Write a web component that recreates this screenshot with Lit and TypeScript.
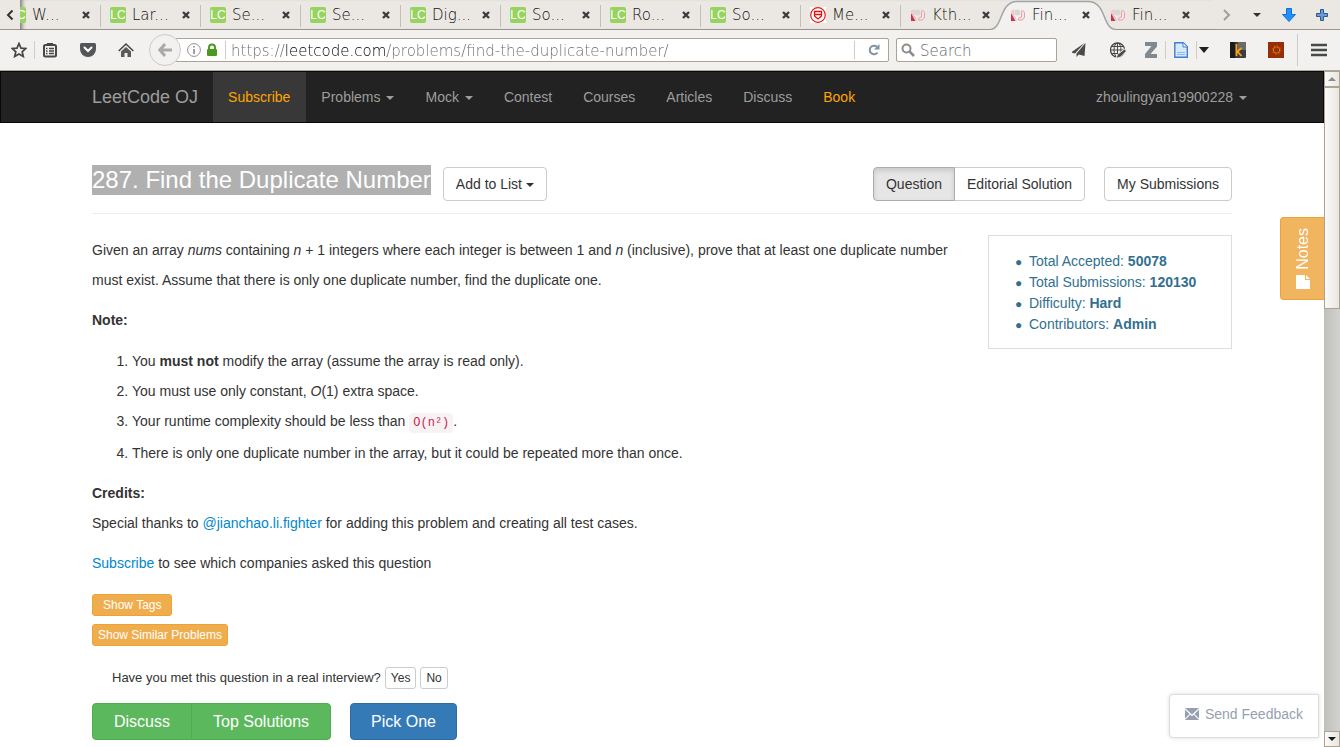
import { LitElement, html, css, svg, nothing } from "lit";
import { customElement, property } from "lit/decorators.js";

type TabKind = "lc" | "shield" | "hands";

interface Tab {
  title: string;
  kind: TabKind;
  active?: boolean;
}

const TABS: Tab[] = [
  { title: "W...", kind: "lc" },
  { title: "Lar...", kind: "lc" },
  { title: "Se...", kind: "lc" },
  { title: "Se...", kind: "lc" },
  { title: "Dig...", kind: "lc" },
  { title: "So...", kind: "lc" },
  { title: "Ro...", kind: "lc" },
  { title: "So...", kind: "lc" },
  { title: "Me...", kind: "shield" },
  { title: "Kth...", kind: "hands" },
  { title: "Fin...", kind: "hands", active: true },
  { title: "Fin...", kind: "hands" },
];

const icon = (w: number, h: number, body: unknown) =>
  html`<svg width=${w} height=${h} viewBox="0 0 ${w} ${h}" aria-hidden="true">${body}</svg>`;

const shieldIcon = icon(16, 16, svg`
  <rect width="16" height="16" fill="#fff"/>
  <circle cx="8" cy="8" r="7.300" fill="#fff" stroke="#f01414" stroke-width="1.200"/>
  <path d="M4.500 4.500h7v4.500L8 12 4.500 9zM4.500 7.500h7" fill="none" stroke="#e01010" stroke-width="1.300"/>`);

const handsIcon = icon(16, 16, svg`
  <path d="M1 6.500v7.500h4.500L4 11 2.500 8z" fill="#c8324a"/>
  <path d="M1.500 5Q1.500 3 4 3L3.500 8l3 5.500H5.500L3 9z" fill="#f3dcdc" stroke="#eab9bd" stroke-width=".8"/>
  <ellipse cx="7.300" cy="5.500" rx="3" ry="3" fill="#d9d6d1"/>
  <path d="M11 3.800q3-.5 3.500 1.700v4.500q-.5 2-2.500 3H8.500v-1.500q1.500-1.500 3-1.500V5" fill="#f7e4e4" stroke="#e5a0a8" stroke-width="1"/>`);

const closeIcon = icon(8, 8, svg`<path d="M1 1l6 6M7 1l-6 6" stroke="#3c3c40" stroke-width="2.400"/>`);

@customElement("browser-tabs")
export class BrowserTabs extends LitElement {
  static styles = css`
    :host { display: flex; height: 30px; background: #ebe8e3; box-shadow: inset 0 -1px #9a968e; color: #111;
      font: 200 15px/32px "DejaVu Sans", sans-serif; }
    button { border: 0; padding: 0; background: none; display: flex; align-items: center; justify-content: center; }
    svg { display: block; flex: none; }
    .scroll { width: 20px; flex: none; }
    .strip { display: flex; flex: 0 1 1193px; min-width: 0; overflow: hidden; box-shadow: inset 5px 0 4px -3px #77736b; }
    .tab { flex: 0 0 100px; box-sizing: border-box; display: flex; align-items: center; padding: 0 10px; position: relative; }
    .tab:first-child { margin-left: -20px; }
    .tab::after { content: ""; position: absolute; right: -1px; top: 5px; height: 22px; width: 1px; background: #c2beb8; }
    .tab.active::after, .tab.before::after, .tab:last-child::after { display: none; }
    .tab.active { z-index: 1; }
    .curve { position: absolute; left: -10px; top: 0; }
    .face { display: flex; align-items: center; position: relative; width: 100%; }
    .lc { width: 16px; height: 16px; border-radius: 2px; background: #96d35f; color: #fff; font: 12px/17px "Liberation Sans", sans-serif; text-align: center; }
    .title { margin-left: 6px; flex: 1; white-space: nowrap; }
    .tools { display: flex; flex: 1; justify-content: space-between; align-items: center; padding: 0 12px 0 8px; }
  `;
  render() {
    return html`
      <button class="scroll" aria-label="Scroll tabs left">${icon(8, 12, svg`<path d="M6.500 1.500L2 6l4.500 4.500" fill="none" stroke="#2e3436" stroke-width="2"/>`)}</button>
      <div class="strip" role="tablist">
        ${TABS.map((t, i) => html`
          <div class="tab ${t.active ? "active" : ""} ${TABS[i + 1]?.active ? "before" : ""}" role="tab">
            ${t.active ? html`<svg class="curve" width="126" height="30" viewBox="0 0 126 30" aria-hidden="true">
              <path d="M0 29.500C13 29.500 9 1.500 27 1.500H98C117 1.500 112 29.500 126 29.500V30H0z" fill="#f2f1f0"/>
              <path d="M0 29.500C13 29.500 9 1.500 27 1.500H98C117 1.500 112 29.500 126 29.500" fill="none" stroke="#a5a5a5" stroke-width="1.500"/></svg>` : nothing}
            <div class="face">
              ${t.kind === "lc" ? html`<span class="lc">LC</span>` : t.kind === "shield" ? shieldIcon : handsIcon}
              <span class="title">${t.title}</span>
              <button aria-label="Close tab">${closeIcon}</button>
            </div>
          </div>`)}
      </div>
      <div class="tools">
        <button aria-label="Scroll tabs right">${icon(12, 12, svg`<path d="M3 1l5 5-5 5" fill="none" stroke="#a09f9c" stroke-width="2"/>`)}</button>
        <button aria-label="All tabs">${icon(8, 4, svg`<path d="M0 0h8L4 4z" fill="#2e3436"/>`)}</button>
        <button aria-label="Downloads">${icon(14, 14, svg`<path d="M4.500.5h5v6h4L7 13.500.5 6.500h4z" fill="#1e90ff" stroke="#1371d1"/>`)}</button>
        <button aria-label="New tab">${icon(12, 12, svg`<path d="M4.500.5h3v4h4v3h-4v4h-3v-4h-4v-3h4z" fill="#6f9bd1" stroke="#2c5894"/>`)}</button>
      </div>`;
  }
}

@customElement("browser-toolbar")
export class BrowserToolbar extends LitElement {
  static styles = css`
    :host { display: flex; align-items: center; height: 40px; padding-left: 4px; background: #f2f1f0; border-bottom: 1px solid #aea79b;
      font: 200 15px/22px "DejaVu Sans", sans-serif; }
    button { border: 0; padding: 0; background: none; display: flex; align-items: center; justify-content: center; flex: none; height: 32px; width: 38px; }
    svg { display: block; flex: none; }
    .w28 { width: 28px; }
    .w30 { width: 30px; }
    .w42 { width: 42px; }
    .w14 { width: 14px; margin-right: 8px; }
    .gap { margin-left: 4px; }
    .sep { width: 1px; height: 18px; background: #cfccc8; flex: none; }
    .tall { height: 32px; margin-left: 2px; }
    .back { width: 32px; margin-left: 4px; border: 1px solid #cfcbc0; border-radius: 50%; background: #f2f1f0; z-index: 1; }
    .box { box-sizing: border-box; height: 24px; border: 1px solid #aca393; border-radius: 2px; background: #fff; display: flex; align-items: center; }
    .url { flex: 1; min-width: 0; margin-left: -6px; padding-left: 11px; gap: 5px; }
    .url .sep { margin-left: 2px; }
    .url button { width: 28px; height: 22px; }
    .search { flex: 0 1 161px; min-width: 80px; margin: 0 4px 0 7px; padding-left: 4px; gap: 5px; }
    input { flex: 1; min-width: 0; width: 100%; height: 22px; border: 0; padding: 1px 0 0; box-sizing: border-box; outline: 0; background: none; font: inherit; color: #2e3436; }
    input::placeholder { color: #666; opacity: 1; }
    .address { -webkit-text-fill-color: transparent; background: linear-gradient(90deg, #686868 54px, #000 54px, #000 156px, #686868 156px); background-clip: text; -webkit-background-clip: text; }
  `;
  render() {
    return html`
      <button class="w30" aria-label="Bookmark">${icon(16, 16, svg`<path d="M8 1.500l2 4.600 4.800.4-3.600 3.300 1.100 4.700L8 12l-4.300 2.500 1.100-4.700L1.200 6.500 6 6.100z" fill="none" stroke="#474747" stroke-width="1.700"/>`)}</button>
      <span class="sep"></span>
      <button class="w30" aria-label="Reading list">${icon(14, 16, svg`<rect x="1" y="3" width="12" height="11.500" rx="1.500" fill="none" stroke="#474747" stroke-width="2"/><path d="M4 1h6v3H4z" fill="#474747"/><path d="M3 6.500h1.500M6 6.500h5M3 9h1.500M6 9h5M3 11.500h1.500M6 11.500h5" stroke="#474747" stroke-width="1.300"/>`)}</button>
      <button class="gap" aria-label="Pocket">${icon(16, 14, svg`<path d="M1.500 0h13Q16 0 16 1.500V6a8 8 0 0 1-16 0V1.500Q0 0 1.500 0z" fill="#55565a"/><path d="M4.500 4.500L8 8l3.500-3.500" fill="none" stroke="#fff" stroke-width="2" stroke-linecap="round"/>`)}</button>
      <button aria-label="Home">${icon(16, 16, svg`<path d="M.7 9L8 2l7.300 7" fill="none" stroke="#474747" stroke-width="1.600"/><path d="M3 9.500l5-4.500 5 4.500V15H9.500v-4h-3v4H3z" fill="#5a5a5a"/>`)}</button>
      <button class="back" aria-label="Back">${icon(14, 14, svg`<path d="M7 1L1.800 7 7 13M2 7h12" fill="none" stroke="#a9a9a9" stroke-width="3"/>`)}</button>
      <div class="box url">
        ${icon(14, 14, svg`<circle cx="7" cy="7" r="6.400" fill="none" stroke="#909090"/><path d="M7 6v5M7 3v1.600" stroke="#808080" stroke-width="1.500"/>`)}
        ${icon(12, 14, svg`<path d="M3 7V4.500a3 3 0 0 1 6 0V7" fill="none" stroke="#4a9a22" stroke-width="2"/><rect x="1" y="6" width="10" height="7" rx="1" fill="#4a9a22"/>`)}
        <span class="sep"></span>
        <input class="address" aria-label="Address" value="https://leetcode.com/problems/find-the-duplicate-number/">
        <span class="sep"></span>
        <button aria-label="Reload">${icon(12, 12, svg`<path d="M9.500 8.500A4.300 4.300 0 1 1 9 2.800" fill="none" stroke="#8394a1" stroke-width="2"/><path d="M11.500 0v5.500H6z" fill="#8394a1"/>`)}</button>
      </div>
      <div class="box search">
        ${icon(14, 14, svg`<circle cx="5.500" cy="5.500" r="4" fill="none" stroke="#8d8d8d" stroke-width="2"/><path d="M8.500 8.500l4.500 4.500" stroke="#8d8d8d" stroke-width="2.500"/>`)}
        <input aria-label="Search" placeholder="Search">
      </div>
      <button aria-label="Send">${icon(16, 16, svg`<path d="M12.500 1L-1 10.500l4 1zM13.500 1L4.500 11.500V15l2.300-2.500L12.500 14z" fill="#4a4a4a"/>`)}</button>
      <button aria-label="Translate">${icon(17, 17, svg`<circle cx="7.500" cy="8" r="7" fill="none" stroke="#474747" stroke-width="1.300"/><ellipse cx="7.500" cy="8" rx="3.500" ry="7" fill="none" stroke="#474747" stroke-width="1"/><path d="M7.500 1v14M.5 8h14M2 4.500h11M2 11.500h11" stroke="#474747" stroke-width="1"/><path d="M14.500 7L7.500 12.500 6 16.500l4.500-1.500L16.500 9z" fill="#474747" stroke="#f2f1f0"/>`)}</button>
      <button class="w28" aria-label="Zotero">${icon(12, 16, svg`<path d="M0 0h12v4.500L5.500 12H12v4H0v-4L6.500 4H0z" fill="#808890"/>`)}</button>
      <span class="sep"></span>
      <button class="w30" aria-label="Save page">${icon(14, 16, svg`<path d="M.8.8h8.500l4 4v10.400H.8z" fill="#d8e9fc" stroke="#3d7fd0" stroke-width="1.400"/><path d="M9 1v4h4" fill="#fff" stroke="#3d7fd0"/><path d="M3 12.500h8M3 10.500h8" stroke="#8db9ea"/>`)}</button>
      <span class="sep"></span>
      <button class="w14" aria-label="Save options">${icon(10, 6, svg`<path d="M0 0h10L5 6z" fill="#1f1f1f"/>`)}</button>
      <button aria-label="Keyword tool">${icon(16, 16, svg`<rect width="16" height="16" rx="1" fill="#3d3d3d"/><rect width="5" height="16" fill="#1c1c1c"/><rect x="8" width="8" height="8" fill="#6a6a6a"/><path d="M6.500 2v12M11.500 6L7.500 9.500l4 4.500" fill="none" stroke="#f7a21b" stroke-width="1.800"/>`)}</button>
      <button aria-label="Settings tool">${icon(16, 16, svg`<rect width="16" height="16" fill="#962f07"/><circle cx="8.500" cy="8" r="3.200" fill="none" stroke="#e07818" stroke-width="1"/><circle cx="8.500" cy="8" r="4.300" fill="none" stroke="#e07818" stroke-width="1" stroke-dasharray="1 2.400"/>`)}</button>
      <span class="sep tall"></span>
      <button class="w42" aria-label="Menu">${icon(16, 14, svg`<path d="M0 2h16M0 7h16M0 12h16" stroke="#474b48" stroke-width="2.600"/>`)}</button>`;
  }
}

@customElement("caret-mark")
export class CaretMark extends LitElement {
  @property({ type: Boolean, reflect: true }) tight = false;
  static styles = css`
    :host { display: inline-block; vertical-align: middle; margin-left: 6px; border-top: 4px solid; border-left: 4px solid transparent; border-right: 4px solid transparent; }
    :host([tight]) { margin-left: 4px; }
  `;
  render() { return nothing; }
}

@customElement("site-nav")
export class SiteNav extends LitElement {
  static styles = css`
    :host { display: block; background: #222; border: 1px solid #080808; font: 14px/50px "Liberation Sans", Arial, sans-serif; }
    .row { display: flex; max-width: 1140px; margin: 0 auto; }
    a { color: #9d9d9d; text-decoration: none; padding: 0 16px 0 15px; white-space: nowrap; }
    .brand { font-size: 18px; padding: 0 15px 0 0; }
    .gold { color: orange; }
    .on { background: #383838; }
    .user { margin: 0 -15px 0 auto; padding: 0; }
  `;
  render() {
    return html`<nav class="row">
      <a class="brand" href="#">LeetCode OJ</a>
      <a class="gold on" href="#">Subscribe</a>
      <a href="#">Problems<caret-mark></caret-mark></a>
      <a href="#">Mock<caret-mark></caret-mark></a>
      <a href="#">Contest</a>
      <a href="#">Courses</a>
      <a href="#">Articles</a>
      <a href="#">Discuss</a>
      <a class="gold" href="#">Book</a>
      <a class="user" href="#">zhoulingyan19900228<caret-mark></caret-mark></a>
    </nav>`;
  }
}

@customElement("problem-page")
export class ProblemPage extends LitElement {
  static styles = css`
    :host { display: block; max-width: 1140px; margin: 0 auto; padding-top: 42px; color: #333; font: 14px/30px "Liberation Sans", Arial, sans-serif; }
    a { color: #0088cc; text-decoration: none; }
    header { display: flex; padding-bottom: 12px; border-bottom: 1px solid #eee; }
    h3 { margin: 0; align-self: flex-start; font-weight: 400; font-size: 24px; line-height: 30px; background: #b0b0b0; color: #fff; white-space: nowrap; }
    button { font: 14px/20px "Liberation Sans", Arial, sans-serif; border: 1px solid #ccc; border-radius: 4px; background: #fff; color: #333; padding: 6px 12px; white-space: nowrap; }
    header button { margin-top: 2px; }
    .add { margin-left: 12px; }
    .group { display: flex; }
    .views { margin: 0 19px 0 auto; }
    .group button:first-child { border-radius: 4px 0 0 4px; }
    .group button:last-child { border-radius: 0 4px 4px 0; margin-left: -1px; }
    .views .picked { background: #e6e6e6; border-color: #adadad; box-shadow: inset 0 3px 5px rgba(0, 0, 0, 0.125); z-index: 1; }
    .cols { display: flex; align-items: flex-start; gap: 16px; padding-top: 21px; }
    .main { flex: 1; min-width: 0; }
    .info { box-sizing: border-box; flex: 0 0 244px; border: 1px solid #ddd; color: #31708f; line-height: 21px; padding: 15px 0 13px; }
    .info ul { margin: 0; padding-left: 40px; list-style-type: "●  "; }
    .info li::marker { font-size: 12px; }
    p { margin: 0 0 10px; }
    ol { margin: 11px 0 10px; padding-left: 40px; }
    code { font: 12px/20px "Liberation Mono", monospace; color: #c7254e; background: #f9f2f4; border-radius: 4px; padding: 3px 4px; }
    .tall { padding-bottom: 2px; }
    .tags { display: flex; flex-direction: column; align-items: flex-start; gap: 8px; padding-top: 6px; }
    .small { font-size: 12px; line-height: 18px; padding: 1px 5px; border-radius: 3px; }
    .orange { background: #f0ad4e; border-color: #eea236; color: #fff; }
    .wide { padding: 1px 10px; }
    .met { display: flex; align-items: center; gap: 4px; padding: 21px 0 14px 20px; font-size: 13px; line-height: 18px; }
    .actions { display: flex; gap: 19px; }
    .actions button { font-size: 16px; line-height: 21px; padding: 7px 20px; color: #fff; }
    .actions .green { background: #5cb85c; border-color: #4cae4c; padding: 7px 21px; }
    .actions .blue { background: #337ab7; border-color: #2e6da4; border-radius: 4px; }
  `;
  render() {
    return html`
      <header>
        <h3>287. Find the Duplicate Number</h3>
        <button class="add">Add to List<caret-mark tight></caret-mark></button>
        <div class="group views"><button class="picked">Question</button><button>Editorial Solution</button></div>
        <button>My Submissions</button>
      </header>
      <div class="cols">
        <div class="main">
          <p>Given an array <i>nums</i> containing <i>n</i> + 1 integers where each integer is between 1 and <i>n</i> (inclusive), prove that at least one duplicate number must exist. Assume that there is only one duplicate number, find the duplicate one.</p>
          <p><b>Note:</b></p>
          <ol>
            <li>You <b>must not</b> modify the array (assume the array is read only).</li>
            <li>You must use only constant, <i>O</i>(1) extra space.</li>
            <li class="tall">Your runtime complexity should be less than <code>O(n²)</code>.</li>
            <li>There is only one duplicate number in the array, but it could be repeated more than once.</li>
          </ol>
          <p><b>Credits:</b><br>Special thanks to <a href="#">@jianchao.li.fighter</a> for adding this problem and creating all test cases.</p>
          <p><a href="#">Subscribe</a> to see which companies asked this question</p>
          <div class="tags">
            <button class="small orange wide">Show Tags</button>
            <button class="small orange">Show Similar Problems</button>
          </div>
          <div class="met"><span>Have you met this question in a real interview?</span><button class="small">Yes</button><button class="small">No</button></div>
          <div class="actions">
            <div class="group"><button class="green">Discuss</button><button class="green">Top Solutions</button></div>
            <button class="blue">Pick One</button>
          </div>
        </div>
        <aside class="info">
          <ul>
            <li>Total Accepted: <b>50078</b></li>
            <li>Total Submissions: <b>120130</b></li>
            <li>Difficulty: <b>Hard</b></li>
            <li>Contributors: <b>Admin</b></li>
          </ul>
        </aside>
      </div>`;
  }
}

@customElement("app-root")
export class AppRoot extends LitElement {
  static styles = css`
    :host { display: flex; flex-direction: column; height: 100vh; overflow: hidden; background: #fff; }
    .view { flex: 1; min-height: 0; display: flex; }
    .page { flex: 1; min-width: 0; overflow: hidden; position: relative; }
    svg { display: block; flex: none; }
    .notes { position: absolute; right: 0; top: 146px; width: 44px; height: 83px; padding: 0; display: flex; flex-direction: column; align-items: center; justify-content: center; gap: 6px;
      background: #f1b45f; border: 1px solid #eea236; border-right: 0; border-radius: 4px 0 0 4px; color: #fff; font: 16px/20px "Liberation Sans", Arial, sans-serif; }
    .side { writing-mode: vertical-rl; transform: rotate(180deg); }
    .feedback { position: absolute; right: 5px; bottom: 9px; box-sizing: border-box; height: 44px; display: flex; align-items: center; gap: 6px; padding: 0 15px 4px;
      background: #fff; border: 1px solid #ddd; border-radius: 4px 0 0 4px; box-shadow: 0 0 4px #ddd; color: #969fb0; font: 14px/20px "Liberation Sans", Arial, sans-serif; }
    .bar { flex: 0 0 16px; box-sizing: border-box; display: flex; flex-direction: column; background: linear-gradient(90deg, #bfc0bb, #d2d2ce); }
    .bar button { height: 16px; padding: 0; display: flex; align-items: center; justify-content: center; }
    .bar button, .thumb { flex: none; box-sizing: border-box; border: 1px solid #aca393; background: linear-gradient(90deg, #fbfaf9, #e9e6e1); }
    .thumb { height: 222px; }
    .space { flex: 1; }
  `;
  render() {
    return html`
      <browser-tabs></browser-tabs>
      <browser-toolbar></browser-toolbar>
      <div class="view">
        <main class="page">
          <site-nav></site-nav>
          <problem-page></problem-page>
          <button class="notes"><span class="side">Notes</span>${icon(14, 14, svg`<path d="M0 0h9v5h5v9H0zM10 0l4 4h-4z" fill="#fff"/>`)}</button>
          <button class="feedback">${icon(14, 12, svg`<path d="M0 0h14L7 6.500zM0 1.500L4.500 6 0 10.500zM14 1.500L9.500 6 14 10.500zM0 12l5.200-5.200L7 8.300l1.800-1.500L14 12z" fill="#969fb0"/>`)}<span>Send Feedback</span></button>
        </main>
        <div class="bar">
          <button aria-label="Scroll up">${icon(8, 4, svg`<path d="M0 4h8L4 0z" fill="#8d8b86"/>`)}</button>
          <div class="thumb"></div>
          <div class="space"></div>
          <button aria-label="Scroll down">${icon(8, 4, svg`<path d="M0 0h8L4 4z" fill="#1a1a1a"/>`)}</button>
        </div>
      </div>`;
  }
}
